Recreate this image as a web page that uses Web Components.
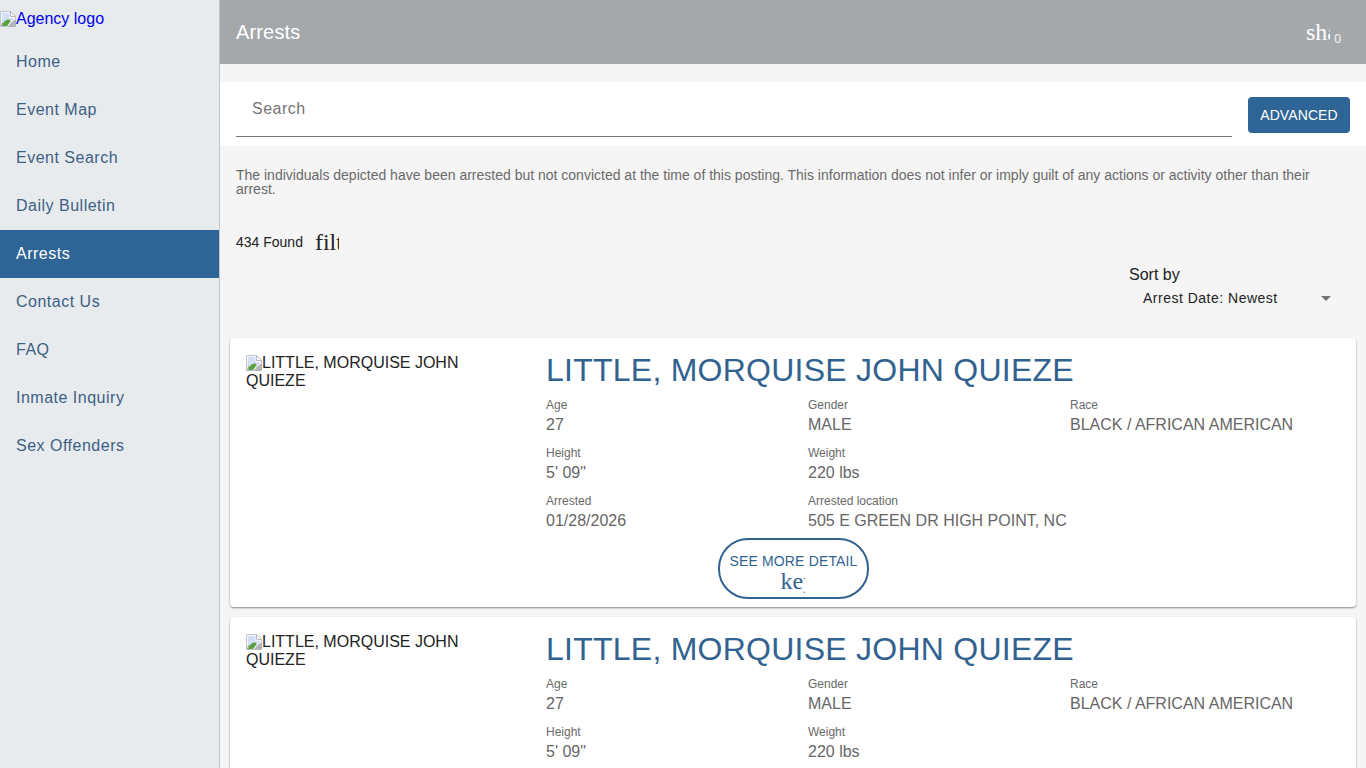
<!DOCTYPE html>
<html lang="en"><head><meta charset="utf-8"><title>Arrests</title>
<style>
html,body{margin:0;height:768px;overflow:hidden;background:#f5f5f5;font-family:"Liberation Sans",Arial,sans-serif;}
</style></head><body>
<app-shell>
  <side-nav slot="side">
    <nav-item>Home</nav-item><nav-item>Event Map</nav-item><nav-item>Event Search</nav-item><nav-item>Daily Bulletin</nav-item>
    <nav-item active>Arrests</nav-item><nav-item>Contact Us</nav-item><nav-item>FAQ</nav-item><nav-item>Inmate Inquiry</nav-item><nav-item>Sex Offenders</nav-item>
  </side-nav>
  <top-bar>Arrests</top-bar>
  <search-band></search-band>
  <notice-text>The individuals depicted have been arrested but not convicted at the time of this posting. This information does not infer or imply guilt of any actions or activity other than their arrest.</notice-text>
  <found-row></found-row>
  <sort-box></sort-box>
  <arrest-card></arrest-card>
  <arrest-card></arrest-card>
</app-shell>
<script>
const broken=`<svg width="16" height="16" viewBox="0 0 16 16" style="vertical-align:-3px;flex:none" aria-hidden="true"><path d="M.5.5h10l5 5v10H.5z" fill="#f4f6fc" stroke="#c3c5cb"/><path d="M10.5.5v5h5z" fill="#fff" stroke="#b9bbc2"/><path d="M2 2h7.500v5h4.500v1.500L10 11H2z" fill="#d3def7"/><path d="M2 15c.5-3 3-6 6.500-6.500 2 0 2.500 1 1.500 2.500l-3 4z" fill="#58a33f"/><path d="M1 15.500l1-4 1.500-.5-2 4.500z" fill="#9a9a9a"/><path d="M8 15.500l3-4 4.500-3v7z" fill="#8b8b8b" opacity=".6"/></svg>`;
function def(name,html,init){customElements.define(name,class extends HTMLElement{constructor(){super();this.attachShadow({mode:'open'}).innerHTML=html;if(init)init(this)}})}
def('app-shell',`<style>:host{display:grid;grid-template-columns:220px 1fr;height:768px;overflow:hidden}
main{min-width:0;display:flex;flex-direction:column}</style><slot name="side"></slot><main><slot></slot></main>`);
def('side-nav',`<style>:host{display:block;background:#e8ebed;border-right:1px solid #c4c7ca;height:768px;box-sizing:border-box}
.logo{height:38px;line-height:37px;font-size:16px;color:#00e;white-space:nowrap}
.list{display:flex;flex-direction:column}</style><div class="logo">${broken}<span>Agency logo</span></div><div class="list"><slot></slot></div>`);
def('nav-item',`<style>:host{display:flex;align-items:center;height:48px;padding:0 16px;font-size:16px;letter-spacing:.5px;color:#3c5f85}
:host([active]){background:#2f6496;color:#fff}</style><slot></slot>`);
def('top-bar',`<style>:host{display:flex;align-items:center;justify-content:space-between;height:64px;flex:none;background:#a4a8ab;color:#fff;padding:0 16px;font-size:20px;letter-spacing:.15px}
.r{display:flex;align-items:center;margin-right:9px;letter-spacing:0}
.i{font:24px/24px "Liberation Serif",serif;width:24px;height:24px;overflow:hidden;white-space:nowrap}
.b{font-size:13px;margin-left:4px;margin-top:13px;width:7px;height:16px;line-height:16px;font-family:Roboto,sans-serif;color:#eee}</style><span><slot></slot></span><span class="r"><span class="i">share</span><span class="b">0</span></span>`);
def('search-band',`<style>:host{display:flex;align-items:center;gap:16px;height:64px;flex:none;margin-top:18px;background:#fff;padding:0 16px}
.f{flex:1;height:55px;box-sizing:border-box;border-bottom:1px solid #757575;color:#757575;font-size:16px;letter-spacing:.5px;line-height:54px;padding-left:16px;align-self:flex-start}
button{all:unset;box-sizing:border-box;width:102px;height:36px;background:#2f6496;color:#fff;border-radius:4px;font-size:14px;letter-spacing:.1px;text-align:center;line-height:36px;margin-top:2px}</style><div class="f">Search</div><button>ADVANCED</button>`);
def('notice-text',`<style>:host{display:block;padding:22px 16px 0;font-size:14px;line-height:14px;color:#6a6a6a;height:62px;flex:none}</style><slot></slot>`);
def('found-row',`<style>:host{display:flex;align-items:center;height:24px;flex:none;padding:0 16px;font-size:14px;color:#222}
.i{font:24px/24px "Liberation Serif",serif;width:24px;height:24px;overflow:hidden;white-space:nowrap;margin-left:13px;color:#222;position:relative;left:-1px}</style><span>434 Found</span><span class="i">filter_list</span>`);
def('sort-box',`<style>:host{display:block;flex:none;height:84px;position:relative}
.w{position:absolute;left:906px;top:0;width:222px}
.l{position:absolute;left:3px;top:12px;font-size:16px;line-height:18px;color:#222;background:#f5f5f5;padding-right:1px}
.s{position:absolute;top:23px;left:0;width:222px;height:42px;border:1px solid #f2f2f2;border-radius:4px;box-sizing:border-box;display:flex;align-items:center;justify-content:space-between;padding:0 16px;font-size:14px;letter-spacing:.5px;color:#222}
.a{width:0;height:0;border:5px solid transparent;border-top-color:#757575;border-bottom:0}</style>
<div class="w"><div class="s"><span>Arrest Date: Newest</span><span class="a"></span></div><div class="l">Sort by</div></div>`);
def('info-field',`<style>:host{display:block;height:48px;box-sizing:border-box}
.l{font-size:12px;line-height:14px;color:#6a6a6a;padding-top:3px;height:14px}
.v{font-size:16px;line-height:20px;color:#666;margin-top:3px}</style><div class="l"></div><div class="v"></div>`);
def('arrest-card',`<style>:host{display:flex;flex:none;background:#fff;border-radius:4px;box-shadow:0 1px 2px rgba(0,0,0,.45);margin:0 10px 10px;height:269px;padding:16px 16px 0;box-sizing:border-box;position:relative;color:#222}
.img{width:300px;flex:none;font-size:16px;line-height:18px;padding-right:60px;box-sizing:border-box}
.body{flex:1;min-width:0;display:flex;flex-direction:column}
h2{margin:0;font-weight:400;font-size:32px;line-height:32px;color:#32628f;letter-spacing:.25px}
.g{display:grid;grid-template-columns:262px 262px 1fr;margin-top:9px}
.more{align-self:flex-start;margin-left:172px;margin-top:-1px;width:151px;height:61px;box-sizing:border-box;border:2px solid #32628f;border-radius:30px;display:flex;flex-direction:column;align-items:center;color:#32628f;font-size:14px;letter-spacing:.15px;padding-top:13px;line-height:16px}
.k{font:24px/24px "Liberation Serif",serif;letter-spacing:0;width:24px;height:24px;overflow:hidden;white-space:nowrap;position:relative;left:-1px}
</style>
<div class="img">${broken}LITTLE, MORQUISE JOHN QUIEZE</div>
<div class="body"><h2>LITTLE, MORQUISE JOHN QUIEZE</h2>
<div class="g">
<info-field data-l="Age" data-v="27"></info-field><info-field data-l="Gender" data-v="MALE"></info-field><info-field data-l="Race" data-v="BLACK / AFRICAN AMERICAN"></info-field>
<info-field data-l="Height" data-v="5' 09&quot;"></info-field><info-field data-l="Weight" data-v="220 lbs"></info-field><span></span>
<info-field data-l="Arrested" data-v="01/28/2026"></info-field><info-field data-l="Arrested location" data-v="505 E GREEN DR HIGH POINT, NC"></info-field><span></span>
</div>
<div class="more"><span>SEE MORE DETAIL</span><span class="k">keyboard_arrow_down</span></div></div>`);
function fill(root){root.querySelectorAll('info-field').forEach(f=>{f.shadowRoot.querySelector('.l').textContent=f.dataset.l;f.shadowRoot.querySelector('.v').textContent=f.dataset.v})}
document.querySelectorAll('arrest-card').forEach(c=>fill(c.shadowRoot));
</script>
</body></html>
